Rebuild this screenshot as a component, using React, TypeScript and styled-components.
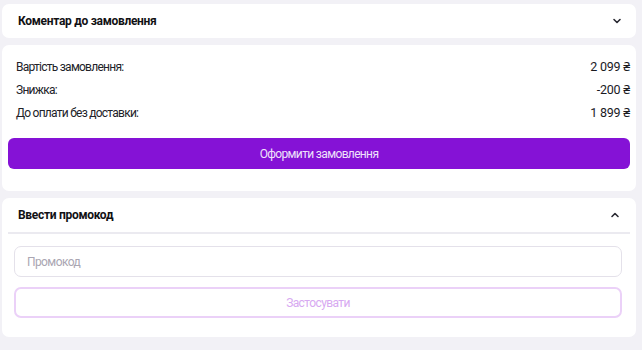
import styled, { createGlobalStyle } from "styled-components";

const GlobalStyle = createGlobalStyle`
  html, body {
    margin: 0;
    padding: 0;
    background: #f2f1f6;
    font-family: Roboto, "Noto Sans", sans-serif;
    color: #1b1b1f;
  }
`;

const Chevron = ({ up }: { up?: boolean }) => (
  <svg width="10" height="10" viewBox="0 0 10 10" fill="none">
    <path
      d={up ? "M2 6.5 L5 3.5 L8 6.5" : "M2 3.5 L5 6.5 L8 3.5"}
      stroke="#2a2a33"
      strokeWidth="1.6"
      strokeLinecap="round"
      strokeLinejoin="round"
    />
  </svg>
);

const App = () => {
  return (
    <>
      <GlobalStyle />
      <Page>
        <Card>
          <Header>
            <Title>Коментар до замовлення</Title>
            <Chevron />
          </Header>
        </Card>

        <Card>
          <Summary>
            <Row>
              <Label>Вартість замовлення:</Label>
              <Value>2 099 ₴</Value>
            </Row>
            <Row>
              <Label>Знижка:</Label>
              <Value>-200 ₴</Value>
            </Row>
            <Row>
              <Label>До оплати без доставки:</Label>
              <Value>1 899 ₴</Value>
            </Row>
          </Summary>
          <PrimaryButton>Оформити замовлення</PrimaryButton>
        </Card>

        <Card>
          <Header $divided>
            <Title>Ввести промокод</Title>
            <Chevron up />
          </Header>
          <PromoForm>
            <Input placeholder="Промокод" />
            <OutlineButton>Застосувати</OutlineButton>
          </PromoForm>
        </Card>
      </Page>
    </>
  );
};

export default App;

const Page = styled.div`
  width: 634px;
  padding: 4px 6px 14px 2px;
  display: flex;
  flex-direction: column;
  gap: 7px;
`;

const Card = styled.div`
  background: #ffffff;
  border-radius: 7px;
  display: flex;
  flex-direction: column;
`;

const Header = styled.div<{ $divided?: boolean }>`
  height: 34px;
  margin: 0 ${(p) => (p.$divided ? "6px" : "0")};
  padding: 0 ${(p) => (p.$divided ? "10px 0 10px" : "14px 0 16px")};
  display: flex;
  align-items: center;
  justify-content: space-between;
  border-bottom: ${(p) => (p.$divided ? "2px solid #ebeaf0" : "none")};
`;

const Title = styled.div`
  font-size: 12px;
  font-weight: 700;
  letter-spacing: -0.3px;
  color: #111114;
`;

const Summary = styled.div`
  padding: 13px 6px 0 14px;
  display: flex;
  flex-direction: column;
  gap: 6px;
`;

const Row = styled.div`
  height: 17px;
  display: flex;
  align-items: center;
  justify-content: space-between;
`;

const Label = styled.span`
  font-size: 12px;
  letter-spacing: -0.75px;
  color: #222228;
`;

const Value = styled.span`
  font-size: 12.5px;
  letter-spacing: -0.2px;
  color: #1a1a1f;
`;

const PrimaryButton = styled.button`
  margin: 17px 6px 22px 6px;
  height: 31px;
  border: none;
  border-radius: 6px;
  background: #8512d6;
  color: #efe2fb;
  font-family: Roboto, "Noto Sans", sans-serif;
  font-size: 12px;
  letter-spacing: -0.65px;
  cursor: pointer;
`;

const PromoForm = styled.div`
  padding: 12px 14px 19px 12px;
  display: flex;
  flex-direction: column;
  gap: 10px;
`;

const Input = styled.input`
  height: 31px;
  box-sizing: border-box;
  border: 1.5px solid #e4e1ea;
  border-radius: 7px;
  padding: 0 12px;
  font-family: Roboto, "Noto Sans", sans-serif;
  font-size: 12px;
  outline: none;

  &::placeholder {
    color: #aaa6b2;
    letter-spacing: -0.6px;
  }
`;

const OutlineButton = styled.button`
  height: 31px;
  box-sizing: border-box;
  border: 2px solid #ebd1f8;
  border-radius: 7px;
  background: #ffffff;
  color: #d7a9f1;
  font-family: Roboto, "Noto Sans", sans-serif;
  font-size: 12px;
  letter-spacing: -0.6px;
`;
